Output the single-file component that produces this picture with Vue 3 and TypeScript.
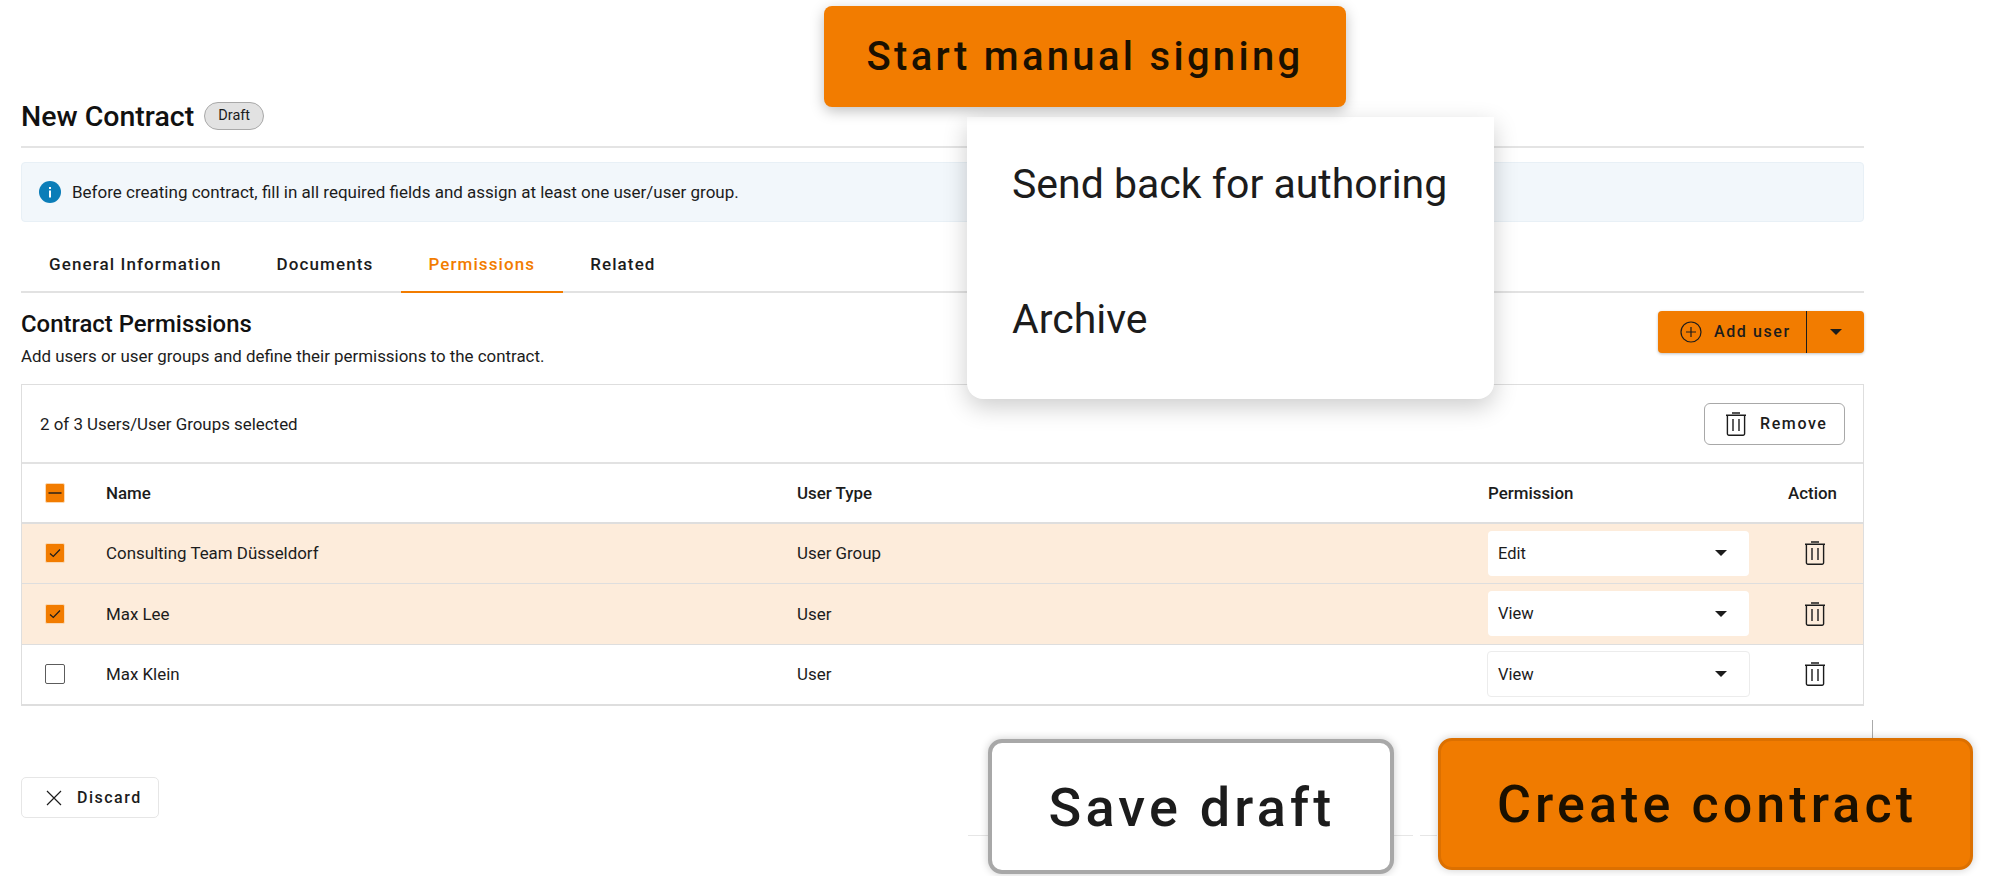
<script setup lang="ts">
const tabs = ['General Information', 'Documents', 'Permissions', 'Related']

const users = [
  { id: 1, name: 'Consulting Team Düsseldorf', type: 'User Group', permission: 'Edit', selected: true },
  { id: 2, name: 'Max Lee', type: 'User', permission: 'View', selected: true },
  { id: 3, name: 'Max Klein', type: 'User', permission: 'View', selected: false },
]
</script>

<template>
  <div class="page">
    <div class="title-row">
      <h1>New Contract</h1>
      <span class="chip">Draft</span>
    </div>

    <div class="alert">
      <svg class="info" width="22" height="22" viewBox="0 0 22 22">
        <circle cx="11" cy="11" r="11" fill="#0b7db8" />
        <rect x="10" y="9.5" width="2" height="7" fill="#fff" />
        <rect x="10" y="6" width="2" height="2" fill="#fff" />
      </svg>
      <span>Before creating contract, fill in all required fields and assign at least one user/user group.</span>
    </div>

    <nav class="tabs">
      <div v-for="tab in tabs" :key="tab" class="tab" :class="{ active: tab === 'Permissions' }">{{ tab }}</div>
    </nav>

    <div class="section-head">
      <div>
        <h2>Contract Permissions</h2>
        <p>Add users or user groups and define their permissions to the contract.</p>
      </div>
      <div class="add-user">
        <div class="add-main">
          <svg width="22" height="22" viewBox="0 0 22 22" fill="none" stroke="#1c1c1c" stroke-width="1.2">
            <circle cx="11" cy="11" r="10" />
            <path d="M11 6v10M6 11h10" />
          </svg>
          <span>Add user</span>
        </div>
        <div class="add-caret"><i class="caret"></i></div>
      </div>
    </div>

    <div class="table">
      <div class="table-bar">
        <span>2 of 3 Users/User Groups selected</span>
        <div class="remove">
          <svg class="trash" width="20" height="24" viewBox="0 0 20 24" fill="none" stroke="#1c1c1c" stroke-width="1.4">
            <path d="M0 3.2h20M6 1h8M1.400 3.200v18.600a1.500 1.500 0 0 0 1.500 1.500h14.200a1.500 1.500 0 0 0 1.500-1.500V3.200M7 7v12M13 7v12" />
          </svg>
          <span>Remove</span>
        </div>
      </div>

      <div class="row head">
        <div class="box checked">
          <svg width="14" height="14" viewBox="0 0 14 14"><path d="M0.500 7h13" stroke="#1c1c1c" stroke-width="1.400" /></svg>
        </div>
        <div>Name</div>
        <div>User Type</div>
        <div>Permission</div>
        <div>Action</div>
      </div>

      <div v-for="user in users" :key="user.id" class="row" :class="{ selected: user.selected }">
        <div class="box" :class="{ checked: user.selected }">
          <svg v-if="user.selected" width="14" height="14" viewBox="0 0 14 14" fill="none">
            <path d="M2 7.500l3.300 3L12 3.500" stroke="#1c1c1c" stroke-width="1.200" />
          </svg>
        </div>
        <div>{{ user.name }}</div>
        <div>{{ user.type }}</div>
        <div class="select" :class="{ outlined: !user.selected }">
          <span>{{ user.permission }}</span>
          <i class="caret"></i>
        </div>
        <div class="action-cell">
          <svg width="20" height="24" viewBox="0 0 20 24" fill="none" stroke="#1c1c1c" stroke-width="1.4">
            <path d="M0 3.2h20M6 1h8M1.400 3.200v18.600a1.500 1.500 0 0 0 1.500 1.500h14.200a1.500 1.500 0 0 0 1.500-1.500V3.200M7 7v12M13 7v12" />
          </svg>
        </div>
      </div>
    </div>

    <footer class="footer">
      <div class="discard">
        <svg width="16" height="16" viewBox="0 0 16 16" fill="none" stroke="#1c1c1c" stroke-width="1.200">
          <path d="M1 1l14 14M15 1L1 15" />
        </svg>
        <span>Discard</span>
      </div>
    </footer>

    <!-- enlarged callouts on top of the page -->
    <div class="menu">
      <div class="menu-item">Send back for authoring</div>
      <div class="menu-item">Archive</div>
    </div>
    <div class="big-sign">Start manual signing</div>
    <i class="stray stray-v"></i>
    <i class="stray stray-h"></i>
    <i class="stray stray-h2"></i>
    <div class="big-save">Save draft</div>
    <div class="big-create">Create contract</div>
  </div>
</template>

<style>
html,
body {
  margin: 0;
  background: #fff;
}
</style>

<style scoped>
.page {
  position: relative;
  box-sizing: border-box;
  width: 2000px;
  height: 876px;
  overflow: hidden;
  padding: 102px 136px 0 21px;
  font-family: Roboto, "Liberation Sans", sans-serif;
  font-size: 16.900px;
  color: #1c1c1c;
  background: #fff;
}

.title-row {
  display: flex;
  align-items: center;
  gap: 10px;
  height: 28px;
  padding-bottom: 16px;
  border-bottom: 2px solid #e4e4e4;
}

h1 {
  margin: 0;
  font-size: 28.500px;
  font-weight: 500;
  color: #111;
}

.chip {
  box-sizing: border-box;
  width: 60px;
  height: 28px;
  line-height: 25px;
  text-align: center;
  font-size: 14.500px;
  background: #e2e2e2;
  border: 1px solid #a9a9a9;
  border-radius: 14px;
}

.alert {
  display: flex;
  align-items: center;
  gap: 11px;
  box-sizing: border-box;
  height: 60px;
  margin-top: 14px;
  padding-left: 17px;
  font-size: 17px;
  background: #f2f7fb;
  border: 1px solid #e8f0f6;
  border-radius: 4px;
}

.tabs {
  display: flex;
  height: 55px;
  margin-top: 14px;
  border-bottom: 2px solid #e2e2e2;
}

.tab {
  box-sizing: border-box;
  height: 57px;
  padding: 0 27.500px 0 28px;
  line-height: 56px;
  font-size: 17px;
  font-weight: 500;
  letter-spacing: 1.1px;
}

.tab + .tab {
  padding-left: 27.500px;
}

.tab.active {
  color: #f27c00;
  border-bottom: 2px solid #f27c00;
}

.section-head {
  display: flex;
  justify-content: space-between;
  align-items: flex-start;
  height: 91px;
}

h2 {
  margin: 16px 0 0;
  font-size: 23.900px;
  line-height: 30px;
  font-weight: 500;
  color: #111;
}

.section-head p {
  margin: 6px 0 0;
  line-height: 22px;
}

.add-user {
  display: flex;
  width: 206px;
  height: 42px;
  margin-top: 18px;
  background: #f27c00;
  border-radius: 4px;
  box-shadow: 0 1px 3px rgba(0, 0, 0, 0.25);
}

.add-main {
  display: flex;
  align-items: center;
  gap: 12px;
  width: 149px;
  padding: 0 0 1px 22px;
  box-sizing: border-box;
  border-right: 1px solid #1c1c1c;
  font-size: 16px;
  font-weight: 500;
  letter-spacing: 1.6px;
}

.add-main svg {
  margin-top: 1px;
}

.add-caret {
  flex: 1;
  display: flex;
  align-items: center;
  justify-content: center;
}

.caret {
  display: block;
  width: 0;
  height: 0;
  border-left: 6px solid transparent;
  border-right: 6px solid transparent;
  border-top: 6px solid #1c1c1c;
}

.table {
  border: 1px solid #dedede;
  border-bottom-width: 2px;
}

.table-bar {
  display: flex;
  justify-content: space-between;
  align-items: center;
  height: 77px;
  padding: 0 18px;
  border-bottom: 2px solid #e2e2e2;
}

.remove {
  display: flex;
  align-items: center;
  gap: 14px;
  box-sizing: border-box;
  width: 141px;
  height: 42px;
  padding-left: 21px;
  border: 1px solid #a8a8a8;
  border-radius: 6px;
  font-size: 16px;
  font-weight: 500;
  letter-spacing: 1.600px;
}

.trash {
  flex: none;
}

.row {
  display: grid;
  grid-template-columns: 84px 691px 691px 300px 1fr;
  align-items: center;
  height: 59.500px;
  border-bottom: 1px solid #dedede;
}

.row:last-child {
  height: 59.500px;
  border-bottom: 0;
}

.row.head {
  height: 57.500px;
  font-weight: 500;
  border-bottom-width: 2px;
}

.row.selected {
  background: #fdecdb;
}

.box {
  box-sizing: border-box;
  display: flex;
  align-items: center;
  justify-content: center;
  width: 20px;
  height: 20px;
  margin-left: 23px;
  border: 1px solid #5c5c5c;
  border-radius: 2px;
}

.box.checked {
  background: #f27c00;
  border-color: #fbd9b4;
}

.select {
  display: flex;
  justify-content: space-between;
  align-items: center;
  box-sizing: border-box;
  width: 261px;
  height: 45px;
  padding: 0 22px 0 10px;
  font-size: 16.500px;
  background: #fff;
  border-radius: 4px;
}

.select.outlined {
  width: 263px;
  height: 46px;
  margin-left: -1px;
  padding-right: 22px;
  border: 1px solid #ececec;
}

.action-cell {
  padding-left: 17px;
  display: flex;
}

.footer {
  margin-top: 71px;
}

.discard {
  display: flex;
  align-items: center;
  gap: 15px;
  box-sizing: border-box;
  width: 138px;
  height: 41px;
  padding-left: 24px;
  border: 1px solid #e6e6e6;
  border-radius: 5px;
  font-size: 16px;
  font-weight: 500;
  letter-spacing: 1.500px;
}

.menu {
  position: absolute;
  left: 967px;
  top: 117px;
  box-sizing: border-box;
  width: 527px;
  height: 282px;
  background: #fff;
  border-radius: 0 0 16px 16px;
  box-shadow: 0 8px 24px rgba(0, 0, 0, 0.2);
}

.menu-item {
  height: 135px;
  padding-left: 45px;
  line-height: 134px;
  font-size: 41px;
  color: #1c1c1c;
}

.big-sign {
  position: absolute;
  left: 824px;
  top: 6px;
  width: 522px;
  height: 101px;
  line-height: 102px;
  text-align: center;
  font-size: 40px;
  font-weight: 500;
  letter-spacing: 3.300px;
  color: #1a1000;
  background: #f27c00;
  border-radius: 8px;
  box-shadow: 0 4px 14px rgba(0, 0, 0, 0.25);
}

.big-save,
.big-create {
  position: absolute;
  box-sizing: border-box;
  text-align: center;
  font-weight: 500;
  border-radius: 14px;
  box-shadow: 0 0 8px rgba(0, 0, 0, 0.2);
}

.big-save {
  left: 988px;
  top: 739px;
  width: 406px;
  height: 135px;
  padding-left: 2px;
  line-height: 130px;
  font-size: 54px;
  letter-spacing: 4.200px;
  background: #fff;
  border: 4px solid #a8a8a8;
}

.big-create {
  left: 1438px;
  top: 738px;
  width: 535px;
  height: 132px;
  padding-left: 3px;
  line-height: 128px;
  font-size: 52px;
  letter-spacing: 4.100px;
  color: #1a1000;
  background: #f07b00;
  border: 3px solid #dc7000;
}

.stray {
  position: absolute;
  background: #e6e6e6;
}

.stray-v {
  left: 1872px;
  top: 720px;
  width: 1px;
  height: 18px;
  background: #aaa;
}

.stray-h {
  left: 968px;
  top: 835px;
  width: 445px;
  height: 1px;
}

.stray-h2 {
  left: 1420px;
  top: 835px;
  width: 17px;
  height: 1px;
}
</style>
